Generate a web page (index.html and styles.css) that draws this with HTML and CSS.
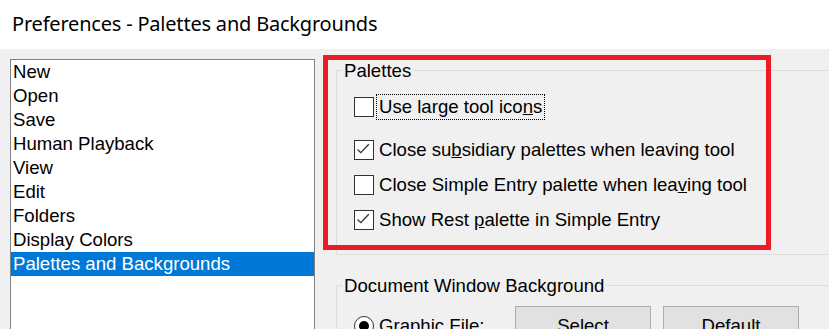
FILE: index.html
```html
<!DOCTYPE html>
<html lang="en">
<head>
    <meta charset="UTF-8">
    <meta name="viewport" content="width=device-width, initial-scale=1.0">
    <title>Preferences - Palettes and Backgrounds</title>
    <link rel="stylesheet" href="styles.css">
</head>
<body>
    <div class="titlebar">Preferences - Palettes and Backgrounds</div>

    <div class="dialog">
        <ul class="categories">
            <li>New</li>
            <li>Open</li>
            <li>Save</li>
            <li>Human Playback</li>
            <li>View</li>
            <li>Edit</li>
            <li>Folders</li>
            <li>Display Colors</li>
            <li class="selected">Palettes and Backgrounds</li>
        </ul>

        <div class="settings">
            <fieldset class="group">
                <legend>Palettes</legend>
                <div class="options">
                    <label class="option first">
                        <span class="box"></span>
                        <span class="text focused">Use large tool ico<u>n</u>s</span>
                    </label>
                    <label class="option">
                        <span class="box">
                            <svg width="18" height="18" viewBox="0 0 18 18"><polyline points="2.5,8.5 5.8,11.6 13.8,3.2"/></svg>
                        </span>
                        <span class="text">Close su<u>b</u>sidiary palettes when leaving tool</span>
                    </label>
                    <label class="option">
                        <span class="box"></span>
                        <span class="text">Close Simple Entry palette when lea<u>v</u>ing tool</span>
                    </label>
                    <label class="option">
                        <span class="box">
                            <svg width="18" height="18" viewBox="0 0 18 18"><polyline points="2.5,8.5 5.8,11.6 13.8,3.2"/></svg>
                        </span>
                        <span class="text">Show Rest <u>p</u>alette in Simple Entry</span>
                    </label>
                </div>
            </fieldset>

            <fieldset class="group">
                <legend>Document Window Background</legend>
                <div class="bg-row">
                    <label class="radio">
                        <span class="dot"></span>
                        <span class="text">Graphic File:</span>
                    </label>
                    <button class="btn">Select</button>
                    <button class="btn">Default</button>
                </div>
            </fieldset>
        </div>

        <div class="highlight"></div>
    </div>
</body>
</html>
```

FILE: styles.css
```css
body {
    margin: 0;
    width: 829px;
    height: 329px;
    overflow: hidden;
    background: #f0f0f0;
    font-family: 'Liberation Sans', Arial, sans-serif;
    font-size: 18.6px;
    color: #000;
}

.titlebar {
    height: 49px;
    box-sizing: border-box;
    padding: 10px 0 0 12px;
    background: #fff;
    font-family: 'Noto Sans', sans-serif;
    font-size: 20px;
    line-height: 28px;
    letter-spacing: -0.2px;
    color: #000;
}

.dialog {
    position: relative;
    display: flex;
    align-items: flex-start;
    height: 280px;
    padding: 10px 0 0 10px;
    box-sizing: border-box;
    overflow: hidden;
}

.categories {
    flex: none;
    width: 303px;
    height: 300px;
    margin: 0;
    padding: 0;
    list-style: none;
    background: #fff;
    border: 1px solid #828282;
}

.categories li {
    height: 24px;
    line-height: 24px;
    padding-left: 2px;
    white-space: nowrap;
}

.categories li.selected {
    background: #0078d7;
    color: #fff;
}

.settings {
    flex: none;
    width: 540px;
    margin: 1px 0 0 21px;
}

.group {
    margin: 0;
    padding: 0 0 21px 5px;
    border: 1px solid #dcdcdc;
    min-width: 0;
}

.group + .group {
    margin-top: 20px;
    padding-bottom: 10px;
}

.group legend {
    padding: 0 2px;
    line-height: 21px;
}

.options {
    display: flex;
    flex-direction: column;
    gap: 9px;
    margin: 13px 0 0 12px;
}

.option {
    display: flex;
    align-items: center;
    height: 26px;
}

.option.first {
    margin-bottom: 8px;
}

.box {
    flex: none;
    width: 18px;
    height: 18px;
    border: 1px solid #333;
    background: #fff;
    margin-right: 3px;
}

.box svg {
    display: block;
}

.box polyline {
    fill: none;
    stroke: #333;
    stroke-width: 1.3;
}

.text {
    padding: 0 2px;
    line-height: 24px;
    white-space: nowrap;
}

.text.focused {
    outline: 1px dotted #000;
}

.bg-row {
    display: flex;
    align-items: center;
    margin: 10px 0 0 12px;
}

.radio {
    display: flex;
    align-items: center;
    width: 161px;
}

.dot {
    flex: none;
    position: relative;
    width: 18px;
    height: 18px;
    border: 1px solid #333;
    border-radius: 50%;
    background: #fff;
    margin-right: 3px;
}

.dot::after {
    content: '';
    position: absolute;
    left: 4px;
    top: 4px;
    width: 10px;
    height: 10px;
    border-radius: 50%;
    background: #000;
}

.btn {
    width: 136px;
    height: 40px;
    margin-right: 12px;
    padding: 0;
    font-family: inherit;
    font-size: 18.6px;
    color: #000;
    background: #e1e1e1;
    border: 1px solid #adadad;
}

.highlight {
    position: absolute;
    left: 323px;
    top: 6px;
    width: 448px;
    height: 195px;
    box-sizing: border-box;
    border: 5px solid #ed1c24;
}
```
